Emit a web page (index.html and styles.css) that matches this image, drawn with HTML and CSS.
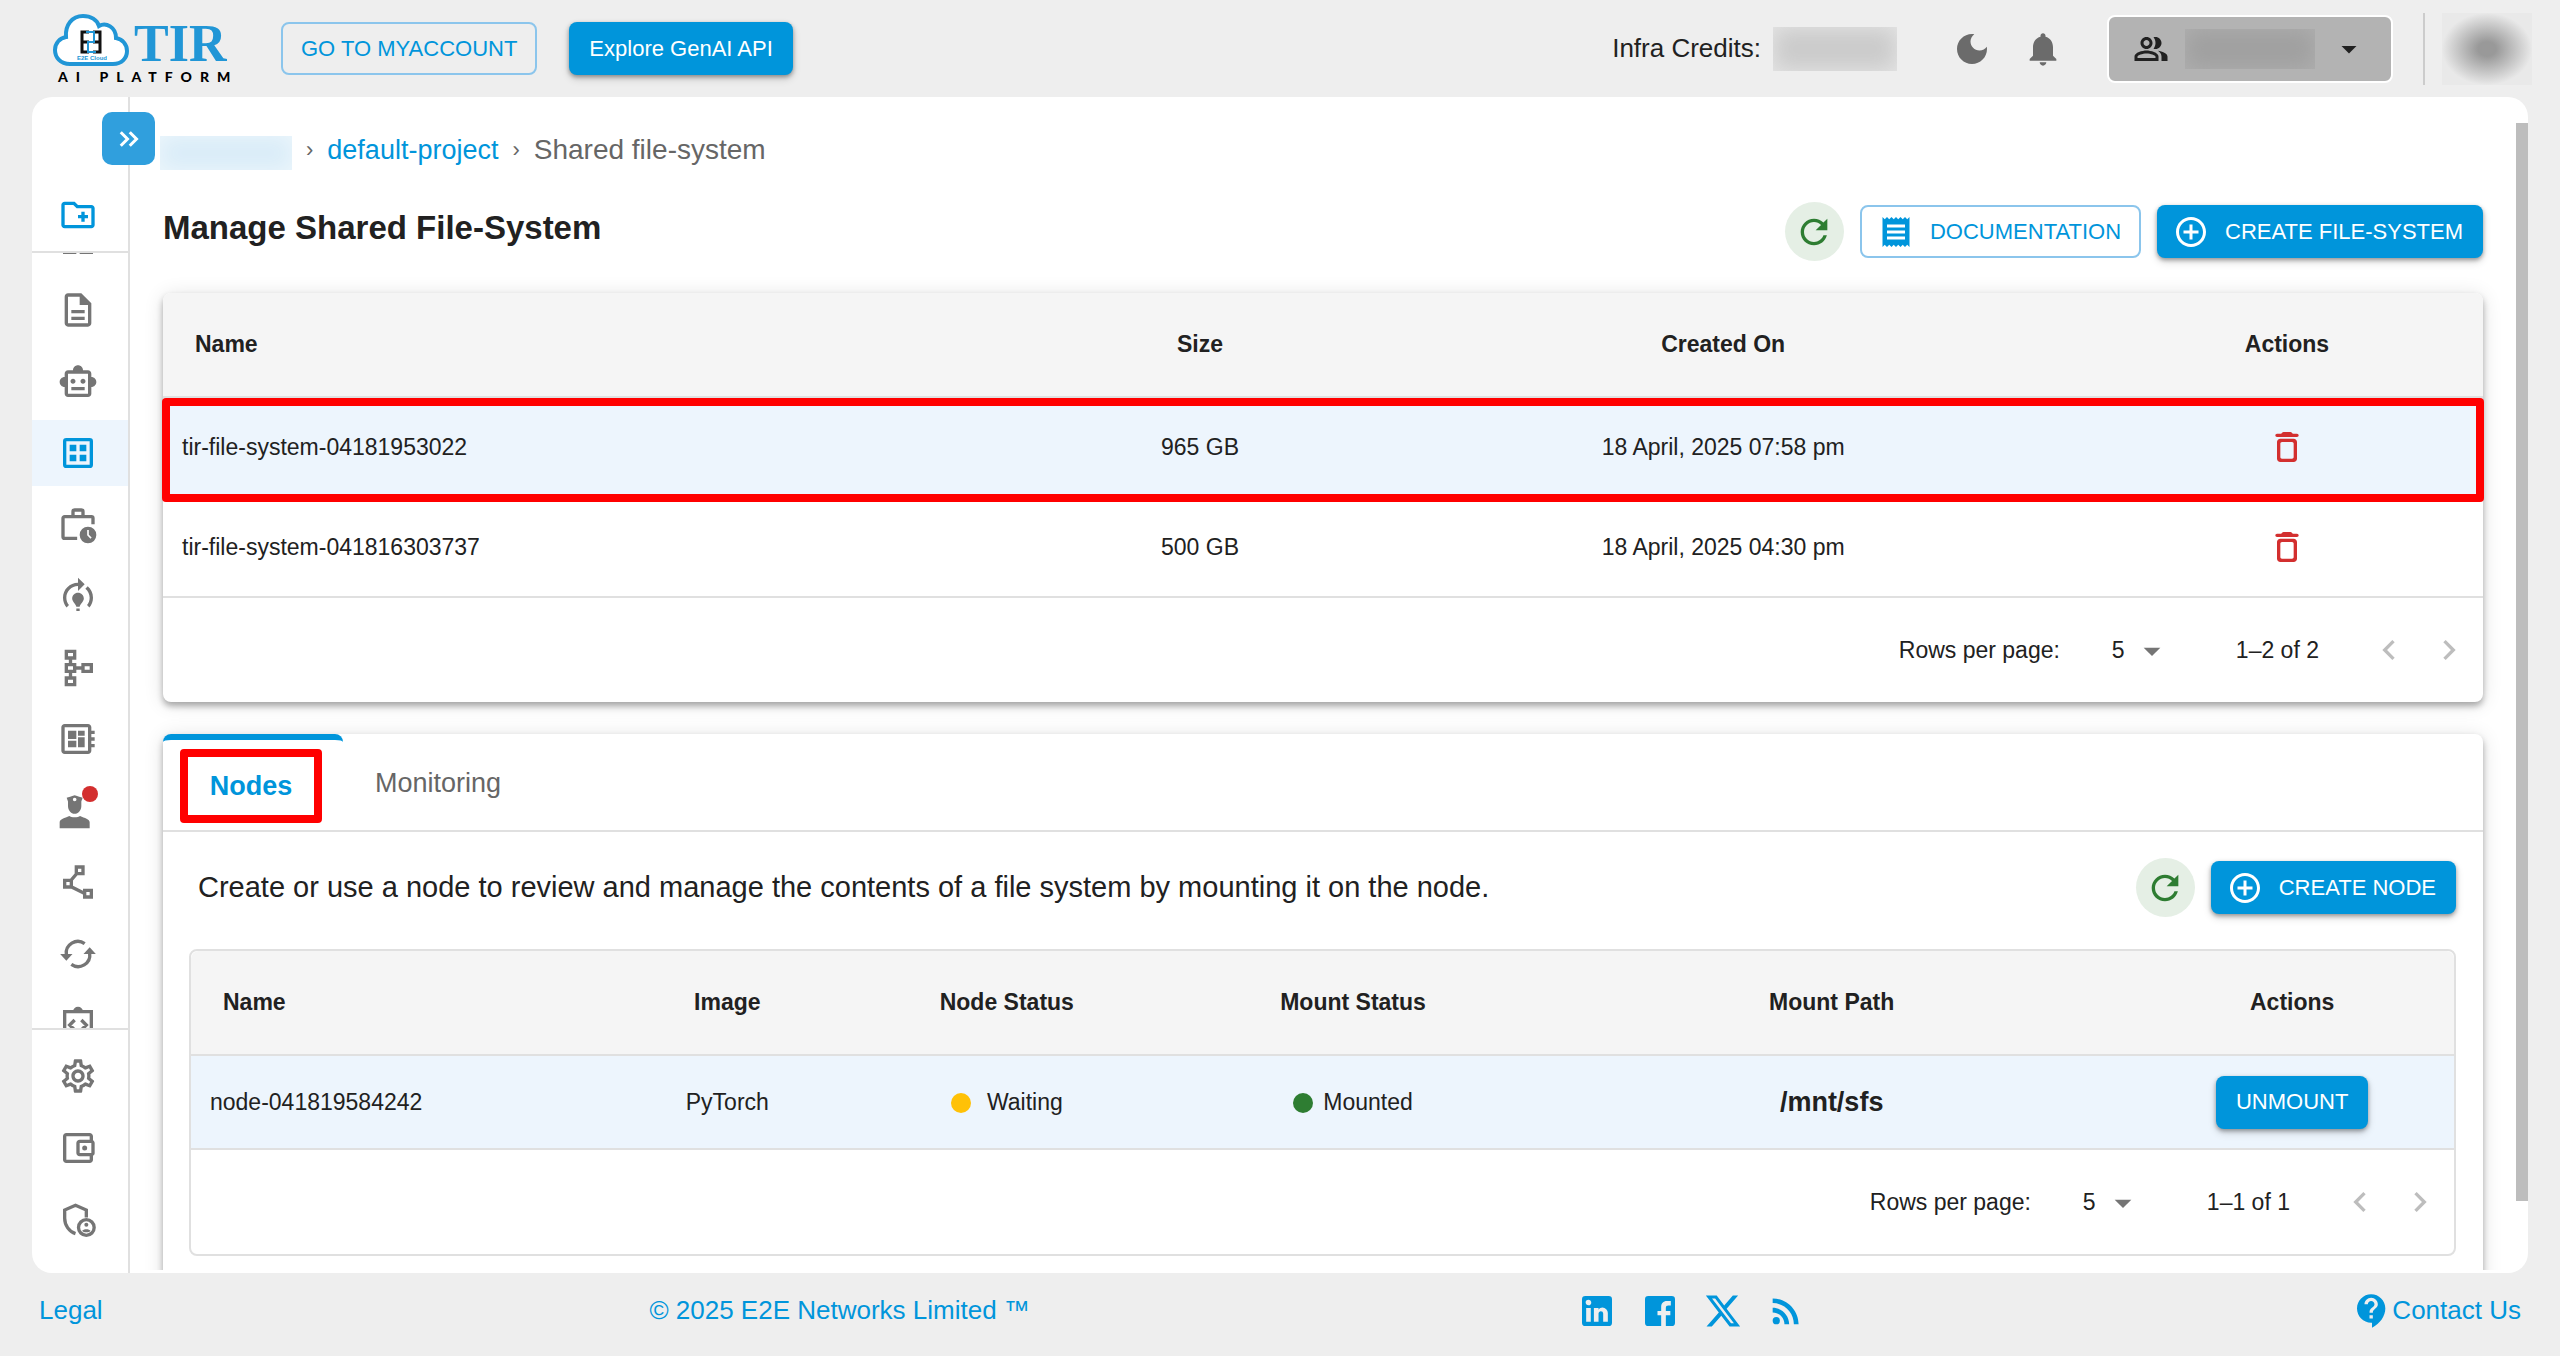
FILE: index.html
```html
<!DOCTYPE html>
<html lang="en">

<head>
    <meta charset="utf-8">
    <title>Manage Shared File-System</title>
    <link rel="stylesheet" href="styles.css">
</head>

<body>
    <!-- shared icons -->
    <svg class="sprite" aria-hidden="true">
        <symbol id="refresh" viewBox="0 0 24 24"><path d="M17.65 6.35C16.2 4.9 14.21 4 12 4c-4.42 0-7.99 3.58-7.99 8s3.57 8 7.99 8c3.73 0 6.84-2.55 7.73-6h-2.08c-.82 2.33-3.04 4-5.65 4-3.31 0-6-2.69-6-6s2.69-6 6-6c1.66 0 3.14.69 4.22 1.78L13 11h7V4l-2.35 2.35z"/></symbol>
        <symbol id="add" viewBox="0 0 24 24"><path d="M13 7h-2v4H7v2h4v4h2v-4h4v-2h-4V7zm-1-5C6.48 2 2 6.48 2 12s4.48 10 10 10 10-4.48 10-10S17.52 2 12 2zm0 18c-4.41 0-8-3.59-8-8s3.59-8 8-8 8 3.59 8 8-3.59 8-8 8z"/></symbol>
        <symbol id="delete" viewBox="0 0 24 24"><path d="M6 19c0 1.1.9 2 2 2h8c1.1 0 2-.9 2-2V9c0-1.1-.9-2-2-2H8c-1.1 0-2 .9-2 2v10zM9 9h6c.55 0 1 .45 1 1v8c0 .55-.45 1-1 1H9c-.55 0-1-.45-1-1v-8c0-.55.45-1 1-1zm6.5-5-.71-.71c-.18-.18-.44-.29-.7-.29H9.91c-.26 0-.52.11-.7.29L8.5 4H6c-.55 0-1 .45-1 1s.45 1 1 1h12c.55 0 1-.45 1-1s-.45-1-1-1h-2.5z"/></symbol>
        <symbol id="arrow" viewBox="0 0 24 24"><path d="m7 10 5 5 5-5z"/></symbol>
        <symbol id="prev" viewBox="0 0 24 24"><path d="M15.41 7.41 14 6l-6 6 6 6 1.41-1.41L10.83 12z"/></symbol>
        <symbol id="next" viewBox="0 0 24 24"><path d="M10 6 8.59 7.41 13.17 12l-4.58 4.59L10 18l6-6z"/></symbol>
    </svg>

    <header class="topbar">
        <a class="logo" href="#" aria-label="TIR AI Platform">
            <svg viewBox="0 0 196 76">
                <path class="cloud" d="M18 53C8 53 3 46 3 39c0-7 5-12 11-13C13 14 20 5 31 5c8 0 14 4 16 10 7-4 17 1 17 12 6 1 11 6 11 13 0 7-5 13-14 13z"/>
                <path class="mark" d="M37 21h-7v20h7M30 31h7M41 21h7v20h-7M41 31h7"/>
                <path class="mark-blue" d="M34 21h8v10h-6v10h8"/>
                <text class="cloud-name" x="25" y="49">E2E Cloud</text>
                <text class="tir" x="82" y="50">TIR</text>
                <text class="platform" x="6" y="71">AI PLATFORM</text>
            </svg>
        </a>
        <button class="btn outlined">GO TO MYACCOUNT</button>
        <button class="btn filled">Explore GenAI API</button>

        <div class="credits">Infra Credits: <span class="smudge amount"></span></div>
        <button class="icon-btn" aria-label="Dark mode">
            <svg viewBox="0 0 24 24"><path d="M12 3c-4.97 0-9 4.03-9 9s4.03 9 9 9 9-4.03 9-9c0-.46-.04-.92-.1-1.36-.98 1.37-2.58 2.26-4.4 2.26-2.98 0-5.4-2.42-5.4-5.4 0-1.81.89-3.42 2.26-4.4-.44-.06-.9-.1-1.36-.1z"/></svg>
        </button>
        <button class="icon-btn" aria-label="Notifications">
            <svg viewBox="0 0 24 24"><path d="M12 22c1.1 0 2-.9 2-2h-4c0 1.1.89 2 2 2zm6-6v-5c0-3.07-1.64-5.64-4.5-6.32V4c0-.83-.67-1.5-1.5-1.5s-1.5.67-1.5 1.5v.68C7.63 5.36 6 7.92 6 11v5l-2 2v1h16v-1l-2-2z"/></svg>
        </button>
        <button class="team" aria-label="Team">
            <svg viewBox="0 0 24 24"><path d="M16.67 13.13C18.04 14.06 19 15.32 19 17v3h4v-3c0-2.18-3.57-3.47-6.33-3.87zM15 12c2.21 0 4-1.79 4-4s-1.79-4-4-4c-.47 0-.91.1-1.33.24C14.5 5.27 15 6.58 15 8s-.5 2.73-1.33 3.76c.42.14.86.24 1.33.24zM9 12c2.21 0 4-1.79 4-4s-1.79-4-4-4-4 1.79-4 4 1.79 4 4 4zm0-6c1.1 0 2 .9 2 2s-.9 2-2 2-2-.9-2-2 .9-2 2-2zM9 13c-2.67 0-8 1.34-8 4v3h16v-3c0-2.66-5.33-4-8-4zm6 5H3v-.99C3.2 16.29 6.3 15 9 15s5.8 1.29 6 2v1z"/></svg>
            <span class="smudge team-name"></span>
            <svg><use href="#arrow"/></svg>
        </button>
        <div class="account"><span class="smudge avatar"></span></div>
    </header>

    <div class="panel">
        <nav class="sidebar">
            <button class="expand" aria-label="Expand menu">
                <svg viewBox="0 0 24 24"><path d="M6.5 7.5 11 12l-4.5 4.5M12.5 7.5 17 12l-4.5 4.5"/></svg>
            </button>
            <div class="side-top">
                <a class="side-item blue" href="#" aria-label="New project"><svg viewBox="0 0 24 24"><path d="M20 6h-8l-2-2H4c-1.11 0-1.99.89-1.99 2L2 18c0 1.11.89 2 2 2h16c1.11 0 2-.89 2-2V8c0-1.11-.89-2-2-2zm0 12H4V6h5.17l2 2H20v10zm-8-4h2v2h2v-2h2v-2h-2v-2h-2v2h-2z"/></svg></a>
            </div>
            <div class="side-scroll">
                <div class="side-list">
                    <a class="side-item" href="#" aria-label="Dashboard"><svg viewBox="0 0 24 24"><path d="M3 3h8v8H3zm10 0h8v8h-8zM3 12h8v9H3zm10 0h8v9h-8z"/></svg></a>
                    <a class="side-item" href="#" aria-label="Datasets"><svg viewBox="0 0 24 24"><path d="M8 16h8v2H8zm0-4h8v2H8zm6-10H6c-1.1 0-2 .9-2 2v16c0 1.1.89 2 1.99 2H18c1.1 0 2-.9 2-2V8l-6-6zm4 18H6V4h7v5h5v11z"/></svg></a>
                    <a class="side-item" href="#" aria-label="Agents"><svg viewBox="0 0 24 24"><path d="M20 9V7c0-1.1-.9-2-2-2h-3c0-1.66-1.34-3-3-3S9 3.34 9 5H6c-1.1 0-2 .9-2 2v2c-1.66 0-3 1.34-3 3s1.34 3 3 3v4c0 1.1.9 2 2 2h12c1.1 0 2-.9 2-2v-4c1.66 0 3-1.34 3-3s-1.34-3-3-3zm-2 10H6V7h12v12zm-9-6c-.83 0-1.5-.67-1.5-1.5S8.17 10 9 10s1.5.67 1.5 1.5S9.83 13 9 13zm7.5-1.5c0 .83-.67 1.5-1.5 1.5s-1.5-.67-1.5-1.5.67-1.5 1.5-1.5 1.5.67 1.5 1.5zM8 15h8v2H8v-2z"/></svg></a>
                    <a class="side-item blue selected" href="#" aria-label="Shared file-system"><svg viewBox="0 0 24 24"><path fill-rule="evenodd" d="M5 3h14a2 2 0 0 1 2 2v14a2 2 0 0 1-2 2H5a2 2 0 0 1-2-2V5a2 2 0 0 1 2-2zm0 2v14h14V5zM7 7h4v4H7zm6 0h4v4h-4zm-6 6h4v4H7zm6 0h4v4h-4z"/></svg></a>
                    <a class="side-item" href="#" aria-label="Jobs"><svg viewBox="0 0 24 24"><path class="line" d="M11.5 20H4c-.6 0-1-.4-1-1V8c0-.6.4-1 1-1h16c.6 0 1 .4 1 1v3.5M9 7V4c0-.6.4-1 1-1h4c.6 0 1 .4 1 1v3"/><path fill-rule="evenodd" d="M18 13a5 5 0 1 0 0 10 5 5 0 0 0 0-10zm-.5 2h1v2.8l1.7 1.7-.7.7-2-2z"/></svg></a>
                    <a class="side-item" href="#" aria-label="Training"><svg viewBox="0 0 24 24"><path d="M15.5 13.5c0 2-2.5 3.5-2.5 5h-2c0-1.5-2.5-3-2.5-5 0-1.93 1.57-3.5 3.5-3.5s3.5 1.57 3.5 3.5zm-2.5 6h-2V21h2v-1.5zm6-6.5c0 1.68-.59 3.21-1.58 4.42l1.42 1.42C20.18 17.27 21 15.23 21 13c0-2.74-1.23-5.19-3.16-6.84l-1.42 1.42C17.99 8.86 19 10.82 19 13zm-3-8-4-4v3c-4.97 0-9 4.03-9 9 0 2.23.82 4.27 2.16 5.84l1.42-1.42C5.59 16.21 5 14.68 5 13c0-3.86 3.14-7 7-7v3l4-4z"/></svg></a>
                    <a class="side-item" href="#" aria-label="Pipelines"><svg viewBox="0 0 24 24"><path class="line" d="M5 2h5v4H5zM5 10h5v4H5zM5 18h5v4H5zM15 10h5v4h-5zM7.5 6v4M7.5 14v4M10 12h5"/></svg></a>
                    <a class="side-item" href="#" aria-label="Inference"><svg viewBox="0 0 24 24"><path d="M22 9V7h-2V5c0-1.1-.9-2-2-2H4c-1.1 0-2 .9-2 2v14c0 1.1.9 2 2 2h14c1.1 0 2-.9 2-2v-2h2v-2h-2v-2h2v-2h-2V9h2zm-4 10H4V5h14v14zM6 13h5v4H6v-4zm6-6h4v3h-4V7zM6 7h5v5H6V7zm6 4h4v6h-4v-6z"/></svg></a>
                    <a class="side-item" href="#" aria-label="Foundation studio"><svg viewBox="0 0 24 24"><path fill-rule="evenodd" d="M10 2.5c2 .7 3.6 1.1 4.8 1.6L14 6.3V9c0 2.5-1.8 4.7-4 4.7S6 11.5 6 9V6.3l-.8-2.2C6.4 3.6 8 3.2 10 2.5zM10 4a1.1 1.1 0 1 0 0 2.2A1.1 1.1 0 0 0 10 4z"/><path d="M1 22.3v-3.6C1 17 4 16.2 6.8 15c1 1 5.4 1 6.4 0C16 16.2 19 17 19 18.7v3.6z"/></svg><span class="dot-badge"></span></a>
                    <a class="side-item" href="#" aria-label="Vector database"><svg viewBox="0 0 24 24"><path fill-rule="evenodd" d="M15 16v1.26l-6-3v-3.17L11.7 8H16V2h-6v4.9L7.3 10H3v6h5l7 3.5V22h6v-6h-6zM12 4h2v2h-2V4zM7 14H5v-2h2v2zm12 6h-2v-2h2v2z"/></svg></a>
                    <a class="side-item" href="#" aria-label="Sync"><svg viewBox="0 0 24 24"><path class="line" d="M16 5.8A7 7 0 0 0 5 12.5M8 18.2a7 7 0 0 0 11-6.7"/><path d="M1.3 12h7.4L5 16zM15.3 12h7.4L19 8z"/></svg></a>
                    <a class="side-item" href="#" aria-label="API"><svg viewBox="0 0 24 24"><path class="line" d="M4 4h16v16H4zM10 9l-3 3 3 3M14 9l3 3-3 3M10 4a2 2 0 0 1 4 0"/></svg></a>
                </div>
            </div>
            <div class="side-bottom">
                <a class="side-item" href="#" aria-label="Settings"><svg viewBox="0 0 24 24"><path d="M19.43 12.98c.04-.32.07-.64.07-.98 0-.34-.03-.66-.07-.98l2.11-1.65c.19-.15.24-.42.12-.64l-2-3.46c-.09-.16-.26-.25-.44-.25-.06 0-.12.01-.17.03l-2.49 1c-.52-.4-1.08-.73-1.69-.98l-.38-2.65C14.46 2.18 14.25 2 14 2h-4c-.25 0-.46.18-.49.42l-.38 2.65c-.61.25-1.17.59-1.69.98l-2.49-1c-.06-.02-.12-.03-.18-.03-.17 0-.34.09-.43.25l-2 3.46c-.13.22-.07.49.12.64l2.11 1.65c-.04.32-.07.65-.07.98 0 .33.03.66.07.98l-2.11 1.65c-.19.15-.24.42-.12.64l2 3.46c.09.16.26.25.44.25.06 0 .12-.01.17-.03l2.49-1c.52.4 1.08.73 1.69.98l.38 2.65c.03.24.24.42.49.42h4c.25 0 .46-.18.49-.42l.38-2.65c.61-.25 1.17-.59 1.69-.98l2.49 1c.06.02.12.03.18.03.17 0 .34-.09.43-.25l2-3.46c.12-.22.07-.49-.12-.64l-2.11-1.65zm-1.98-1.71c.04.31.05.52.05.73 0 .21-.02.43-.05.73l-.14 1.13.89.7 1.08.84-.7 1.21-1.27-.51-1.04-.42-.9.68c-.43.32-.84.56-1.25.73l-1.06.43-.16 1.13-.2 1.35h-1.4l-.19-1.35-.16-1.13-1.06-.43c-.43-.18-.83-.41-1.23-.71l-.91-.7-1.06.43-1.27.51-.7-1.21 1.08-.84.89-.7-.14-1.13c-.03-.31-.05-.54-.05-.74s.02-.43.05-.73l.14-1.13-.89-.7-1.08-.84.7-1.21 1.27.51 1.04.42.9-.68c.43-.32.84-.56 1.25-.73l1.06-.43.16-1.13.2-1.35h1.39l.19 1.35.16 1.13 1.06.43c.43.18.83.41 1.23.71l.91.7 1.06-.43 1.27-.51.7 1.21-1.07.85-.89.7.14 1.13zM12 8c-2.21 0-4 1.79-4 4s1.79 4 4 4 4-1.79 4-4-1.79-4-4-4zm0 6c-1.1 0-2-.9-2-2s.9-2 2-2 2 .9 2 2-.9 2-2 2z"/></svg></a>
                <a class="side-item" href="#" aria-label="Billing"><svg viewBox="0 0 24 24"><path d="M21 7.28V5c0-1.1-.9-2-2-2H5c-1.11 0-2 .9-2 2v14c0 1.1.89 2 2 2h14c1.1 0 2-.9 2-2v-2.28c.59-.35 1-.98 1-1.72V9c0-.74-.41-1.37-1-1.72zM20 9v6h-7V9h7zM5 19V5h14v2h-6c-1.1 0-2 .9-2 2v6c0 1.1.9 2 2 2h6v2H5z"/><circle cx="16" cy="12" r="1.5"/></svg></a>
                <a class="side-item" href="#" aria-label="Access control"><svg viewBox="0 0 24 24"><path class="line" d="M17 10.5V6l-6.500-2.800L4 6v5c0 4.200 2.700 8 6.500 9.200"/><circle class="line" cx="17" cy="16.5" r="4.7"/><circle cx="17" cy="14.8" r="1.2"/><path d="M14.5 18.5c.7-1.3 4.3-1.3 5 0-.7 1.2-4.3 1.2-5 0z"/></svg></a>
            </div>
        </nav>

        <main class="content">
            <nav class="breadcrumb" aria-label="Breadcrumb">
                <span class="smudge crumb"></span>
                <span class="sep">›</span>
                <a href="#">default-project</a>
                <span class="sep">›</span>
                <span class="here">Shared file-system</span>
            </nav>

            <div class="title-row">
                <h1>Manage Shared File-System</h1>
                <button class="refresh" aria-label="Refresh"><svg><use href="#refresh"/></svg></button>
                <button class="btn outlined with-icon">
                    <svg viewBox="0 0 24 24"><path d="M18 17H6v-2h12v2zm0-4H6v-2h12v2zm0-4H6V7h12v2zM3 22l1.5-1.5L6 22l1.5-1.5L9 22l1.5-1.5L12 22l1.5-1.5L15 22l1.5-1.5L18 22l1.5-1.5L21 22V2l-1.5 1.5L18 2l-1.5 1.5L15 2l-1.5 1.5L12 2l-1.5 1.5L9 2 7.5 3.5 6 2 4.5 3.5 3 2v20z"/></svg>
                    DOCUMENTATION
                </button>
                <button class="btn filled with-icon"><svg><use href="#add"/></svg>CREATE FILE-SYSTEM</button>
            </div>

            <section class="card">
                <table class="fs-table">
                    <thead>
                        <tr>
                            <th class="w-name">Name</th>
                            <th class="w-size">Size</th>
                            <th class="w-created">Created On</th>
                            <th>Actions</th>
                        </tr>
                    </thead>
                    <tbody>
                        <tr class="active marked">
                            <td>tir-file-system-04181953022</td>
                            <td>965 GB</td>
                            <td>18 April, 2025 07:58 pm</td>
                            <td><button class="delete" aria-label="Delete"><svg><use href="#delete"/></svg></button></td>
                        </tr>
                        <tr>
                            <td>tir-file-system-041816303737</td>
                            <td>500 GB</td>
                            <td>18 April, 2025 04:30 pm</td>
                            <td><button class="delete" aria-label="Delete"><svg><use href="#delete"/></svg></button></td>
                        </tr>
                    </tbody>
                </table>
                <div class="pagination">
                    <label for="fs-rows">Rows per page:</label>
                    <div class="rows">
                        <select id="fs-rows"><option>5</option><option>10</option><option>25</option></select>
                        <svg><use href="#arrow"/></svg>
                    </div>
                    <span class="range">1–2 of 2</span>
                    <button class="page" disabled aria-label="Previous page"><svg><use href="#prev"/></svg></button>
                    <button class="page" disabled aria-label="Next page"><svg><use href="#next"/></svg></button>
                </div>
            </section>

            <section class="card">
                <div class="tabs" role="tablist">
                    <button class="tab current" role="tab" aria-selected="true"><span>Nodes</span></button>
                    <button class="tab" role="tab" aria-selected="false">Monitoring</button>
                </div>
                <div class="nodes">
                    <div class="nodes-head">
                        <p>Create or use a node to review and manage the contents of a file system by mounting it on the node.</p>
                        <button class="refresh" aria-label="Refresh nodes"><svg><use href="#refresh"/></svg></button>
                        <button class="btn filled with-icon"><svg><use href="#add"/></svg>CREATE NODE</button>
                    </div>
                    <div class="bordered">
                        <table class="node-table">
                            <thead>
                                <tr>
                                    <th class="w-node">Name</th>
                                    <th class="w-image">Image</th>
                                    <th class="w-status">Node Status</th>
                                    <th class="w-mount">Mount Status</th>
                                    <th class="w-path">Mount Path</th>
                                    <th>Actions</th>
                                </tr>
                            </thead>
                            <tbody>
                                <tr class="active">
                                    <td>node-041819584242</td>
                                    <td>PyTorch</td>
                                    <td><span class="status waiting">Waiting</span></td>
                                    <td><span class="status">Mounted</span></td>
                                    <td class="path">/mnt/sfs</td>
                                    <td><button class="btn filled">UNMOUNT</button></td>
                                </tr>
                            </tbody>
                        </table>
                        <div class="pagination">
                            <label for="node-rows">Rows per page:</label>
                            <div class="rows">
                                <select id="node-rows"><option>5</option><option>10</option><option>25</option></select>
                                <svg><use href="#arrow"/></svg>
                            </div>
                            <span class="range">1–1 of 1</span>
                            <button class="page" disabled aria-label="Previous page"><svg><use href="#prev"/></svg></button>
                            <button class="page" disabled aria-label="Next page"><svg><use href="#next"/></svg></button>
                        </div>
                    </div>
                </div>
            </section>
        </main>
        <div class="scrollbar"></div>
    </div>

    <footer class="footer">
        <a href="#">Legal</a>
        <a href="#">© 2025 E2E Networks Limited ™</a>
        <div class="social">
            <a href="#" aria-label="LinkedIn"><svg viewBox="0 0 24 24"><path d="M19 3a2 2 0 0 1 2 2v14a2 2 0 0 1-2 2H5a2 2 0 0 1-2-2V5a2 2 0 0 1 2-2h14m-.5 15.5v-5.3a3.26 3.26 0 0 0-3.26-3.26c-.85 0-1.84.52-2.32 1.3v-1.11h-2.79v8.37h2.79v-4.93c0-.77.62-1.4 1.39-1.4a1.4 1.4 0 0 1 1.4 1.4v4.93h2.79M6.88 8.56a1.68 1.68 0 0 0 1.68-1.68c0-.93-.75-1.69-1.68-1.69a1.69 1.69 0 0 0-1.69 1.69c0 .93.76 1.68 1.69 1.68m1.39 9.94v-8.37H5.5v8.37h2.77z"/></svg></a>
            <a href="#" aria-label="Facebook"><svg viewBox="0 0 24 24"><path d="M5 3h14a2 2 0 0 1 2 2v14a2 2 0 0 1-2 2h-3.5v-6.5h2.7V12h-2.7v-1.8c0-1 .4-1.5 1.5-1.5h1.5V6h-2.3c-2.3 0-3.5 1.4-3.500 3.700V12h-2.200v2.500h2.200V21H5a2 2 0 0 1-2-2V5a2 2 0 0 1 2-2z"/></svg></a>
            <a href="#" aria-label="X"><svg viewBox="-2 -2 28 28"><path fill-rule="evenodd" d="M18.9 1.15h3.68l-8.04 9.19L24 22.85h-7.41l-5.8-7.58-6.64 7.58H.47l8.6-9.83L0 1.15h7.6l5.24 6.93zM17.61 20.64h2.04L6.49 3.24H4.3z"/></svg></a>
            <a href="#" aria-label="RSS"><svg viewBox="0 0 24 24"><circle cx="6.18" cy="17.82" r="2.18"/><path d="M4 4.44v2.83c7.03 0 12.73 5.7 12.73 12.73h2.83c0-8.59-6.97-15.56-15.56-15.56zm0 5.66v2.83c3.9 0 7.07 3.17 7.07 7.07h2.83c0-5.47-4.43-9.9-9.9-9.9z"/></svg></a>
        </div>
        <a class="contact" href="#">
            <svg viewBox="0 0 24 24"><path d="M11.5 2C6.81 2 3 5.81 3 10.5S6.81 19 11.5 19h.5v3c4.86-2.34 8-7 8-11.5C20 5.81 16.19 2 11.5 2zm1 14.5h-2v-2h2v2zm0-3.5h-2c0-3.25 3-3 3-5 0-1.1-.9-2-2-2s-2 .9-2 2h-2c0-2.21 1.79-4 4-4s4 1.79 4 4c0 2.5-3 2.75-3 5z"/></svg>
            Contact Us
        </a>
    </footer>
</body>

</html>
```
FILE: styles.css
```css
* {
    box-sizing: border-box;
}

body {
    margin: 0;
    height: 100vh;
    display: flex;
    flex-direction: column;
    overflow: hidden;
    background: #eee;
    color: #212121;
    font-family: "Liberation Sans", Arial, sans-serif;
    font-size: 26px;
}

a {
    color: #0095db;
    text-decoration: none;
}

button {
    font-family: inherit;
    padding: 0;
    border: none;
    background: none;
    color: inherit;
}

svg {
    display: block;
    width: 40px;
    height: 40px;
    fill: currentColor;
    flex: none;
}

.sprite {
    display: none;
}

.line {
    fill: none;
    stroke: currentColor;
    stroke-width: 2;
}

/* blurred-out private values */
.smudge {
    display: block;
    flex: none;
}

/* top bar */
.topbar {
    height: 97px;
    flex: none;
    display: flex;
    align-items: center;
    padding: 0 28px 0 52px;
}

.logo {
    margin-right: 33px;
}

.logo svg {
    width: 196px;
    height: 76px;
    overflow: visible;
}

.cloud {
    fill: #fff;
    stroke: #2196d6;
    stroke-width: 4;
}

.mark {
    fill: none;
    stroke: #111;
    stroke-width: 3;
}

.mark-blue {
    fill: none;
    stroke: #2196d6;
    stroke-width: 2;
}

.cloud-name {
    font-size: 6px;
    font-weight: bold;
    fill: #2196d6;
}

.tir {
    font-family: "Liberation Serif", serif;
    font-size: 52px;
    font-weight: bold;
    fill: #2196d6;
}

.platform {
    font-family: Lato, sans-serif;
    font-size: 14px;
    font-weight: 900;
    letter-spacing: 8px;
    fill: #000;
}

.btn {
    height: 53px;
    flex: none;
    display: inline-flex;
    align-items: center;
    gap: 16px;
    padding: 0 20px;
    border-radius: 8px;
    font-size: 22px;
}

.btn svg {
    width: 36px;
    height: 36px;
}

.outlined {
    border: 2px solid #8bc5ec;
    color: #0095db;
    padding: 0 18px;
}

.filled {
    background: #0095db;
    color: #fff;
    box-shadow: 0 2px 4px rgba(0, 0, 0, .35), 0 4px 8px rgba(0, 0, 0, .14);
}

.btn.with-icon {
    padding-left: 16px;
}

.topbar .filled {
    margin-left: 32px;
}

.credits {
    display: flex;
    align-items: center;
    gap: 12px;
    margin-left: auto;
    margin-right: 39px;
}

.amount {
    width: 124px;
    height: 44px;
    background: #cbcbcb;
    box-shadow: inset 0 0 22px #e8e8e8;
}

.icon-btn {
    width: 71px;
    display: grid;
    place-items: center;
    color: #6b6b6b;
}

.team {
    width: 286px;
    height: 68px;
    display: flex;
    align-items: center;
    gap: 16px;
    margin-left: 29px;
    padding: 0 24px;
    background: #b3b3b3;
    border: 2px solid #fff;
    border-radius: 8px;
    color: #212121;
}

.team svg {
    width: 36px;
    height: 36px;
}

.team-name {
    flex: 1;
    height: 40px;
    background: #a0a0a0;
    box-shadow: inset 0 0 22px #b0b0b0;
}

.account {
    margin-left: 30px;
    padding-left: 17px;
    border-left: 2px solid #ccc;
}

.avatar {
    width: 90px;
    height: 72px;
    background: radial-gradient(closest-side, #999 20%, #e9e9e9);
}

/* white panel */
.panel {
    position: relative;
    flex: 1;
    min-height: 0;
    display: flex;
    margin: 0 32px;
    background: #fff;
    border-radius: 20px;
}

.scrollbar {
    position: absolute;
    top: 26px;
    bottom: 72px;
    right: 0;
    width: 12px;
    background: #bdbdbd;
}

.sidebar {
    position: relative;
    z-index: 1;
    width: 98px;
    flex: none;
    display: flex;
    flex-direction: column;
    border-right: 2px solid #e0e0e0;
    color: #757575;
}

.expand {
    position: absolute;
    top: 15px;
    right: -27px;
    width: 53px;
    height: 53px;
    display: grid;
    place-items: center;
    border-radius: 10px;
    background: #309fdd;
    color: #fff;
}

.expand svg {
    width: 36px;
    height: 36px;
    fill: none;
    stroke: currentColor;
    stroke-width: 2;
}

.side-top {
    padding: 85px 0 3px;
    border-bottom: 2px solid #e0e0e0;
}

.side-item {
    position: relative;
    height: 66px;
    padding-right: 4px;
    display: grid;
    place-items: center;
    color: #757575;
}

.side-item.blue {
    color: #0095db;
}

.side-item.selected {
    background: #edf5fd;
}

.dot-badge {
    position: absolute;
    top: 8px;
    right: 30px;
    width: 16px;
    height: 16px;
    border-radius: 50%;
    background: #d32f2f;
}

.side-scroll {
    flex: 1;
    min-height: 0;
    overflow: hidden;
}

.side-list {
    height: 852px;
    margin-top: -47px;
    display: flex;
    flex-direction: column;
    justify-content: space-between;
}

.side-bottom {
    display: grid;
    gap: 6px;
    padding: 13px 0 20px;
    border-top: 2px solid #e0e0e0;
}

/* page */
.content {
    flex: 1;
    min-width: 0;
    overflow: hidden;
    margin-bottom: 3px;
    padding: 39px 45px 0 33px;
}

.breadcrumb {
    height: 34px;
    display: flex;
    gap: 14px;
    margin: 0 0 32px -3px;
    color: #666;
    font-size: 27px;
    line-height: 28px;
}

.here {
    font-size: 28px;
}

.crumb {
    width: 132px;
    height: 34px;
    background: #d9ecf8;
    box-shadow: inset 0 0 22px #eef7fc;
}

.sep {
    font-size: 22px;
}

.title-row {
    display: flex;
    align-items: center;
    gap: 16px;
    margin-bottom: 32px;
}

h1 {
    flex: 1;
    margin: 0;
    padding-bottom: 8px;
    font-size: 33px;
    line-height: 36px;
}

.refresh {
    width: 59px;
    height: 59px;
    flex: none;
    display: grid;
    place-items: center;
    border-radius: 50%;
    background: #e5efe5;
    color: #2e7d32;
}

.card {
    margin-bottom: 32px;
    background: #fff;
    border-radius: 8px;
    box-shadow: 0 4px 6px rgba(0, 0, 0, .3), 0 2px 20px rgba(0, 0, 0, .12);
}

table {
    width: 100%;
    table-layout: fixed;
    border-collapse: separate;
    border-spacing: 0;
    font-size: 23px;
    text-align: center;
}

th {
    height: 105px;
    padding: 0 16px;
    background: #f5f5f5;
    border-bottom: 2px solid #e0e0e0;
}

th:first-child {
    padding-left: 32px;
    text-align: left;
    border-top-left-radius: 8px;
}

th:last-child {
    border-top-right-radius: 8px;
}

td {
    height: 100px;
    padding: 0 16px;
    border-bottom: 2px solid #e0e0e0;
}

td:first-child {
    padding-left: 19px;
    text-align: left;
}

.active {
    background: #edf5fd;
}

.marked {
    position: relative;
}

.marked td:first-child::after {
    content: "";
    position: absolute;
    inset: 0 -1px -4px;
    border: 8px solid #f00;
    border-radius: 4px;
    pointer-events: none;
}

.w-name { width: 38%; }
.w-size { width: 13.4%; }
.w-created { width: 31.7%; }

.delete {
    display: inline-grid;
    color: #d32f2f;
    vertical-align: middle;
}

.pagination {
    height: 104px;
    display: flex;
    align-items: center;
    justify-content: flex-end;
    padding-right: 4px;
    font-size: 23px;
}

.rows {
    position: relative;
    margin-left: 52px;
}

.rows select {
    width: 60px;
    padding: 0;
    border: none;
    appearance: none;
    background: none;
    color: inherit;
    font: inherit;
}

.rows svg {
    position: absolute;
    top: 50%;
    right: 0;
    margin-top: -19px;
    color: #757575;
    pointer-events: none;
}

.range {
    margin: 0 40px 0 64px;
}

.page {
    width: 60px;
    display: grid;
    place-items: center;
    color: #bdbdbd;
}

/* tabs */
.tabs {
    display: flex;
    height: 98px;
    border-bottom: 2px solid #e0e0e0;
}

.tab {
    padding: 0 32px 4px;
    border-top: 6px solid transparent;
    font-size: 27px;
    color: #666;
}

.tab.current {
    width: 180px;
    padding: 0;
    border-top-color: #0095db;
    border-radius: 8px 8px 0 0;
    color: #0095db;
    font-weight: bold;
}

.tab.current span {
    display: grid;
    place-items: center;
    width: 142px;
    height: 74px;
    margin: 2px 0 0 17px;
    border: 8px solid #f00;
    border-radius: 4px;
}

.nodes {
    padding: 26px 27px 40px 26px;
}

.nodes-head {
    display: flex;
    align-items: center;
    gap: 16px;
    margin-bottom: 32px;
    padding-left: 9px;
}

.nodes-head p {
    flex: 1;
    margin: 0;
    font-size: 29px;
}

.bordered {
    border: 2px solid #e0e0e0;
    border-radius: 8px;
}

.node-table td {
    height: 94px;
}

.w-node { width: 18.7%; }
.w-image { width: 10%; }
.w-status { width: 14.7%; }
.w-mount { width: 15.9%; }
.w-path { width: 26.4%; }

.status {
    display: inline-flex;
    align-items: center;
    gap: 10px;
    vertical-align: middle;
}

.status::before {
    content: "";
    width: 20px;
    height: 20px;
    border-radius: 50%;
    background: #2e7d32;
}

.waiting {
    gap: 16px;
}

.waiting::before {
    background: #ffc107;
}

.node-table .path {
    font-size: 27px;
    font-weight: bold;
}

/* footer */
.footer {
    height: 83px;
    flex: none;
    display: flex;
    align-items: center;
    justify-content: space-between;
    padding: 0 39px 8px;
}

.social {
    display: flex;
    gap: 23px;
}

.contact {
    display: flex;
    align-items: center;
}
```
